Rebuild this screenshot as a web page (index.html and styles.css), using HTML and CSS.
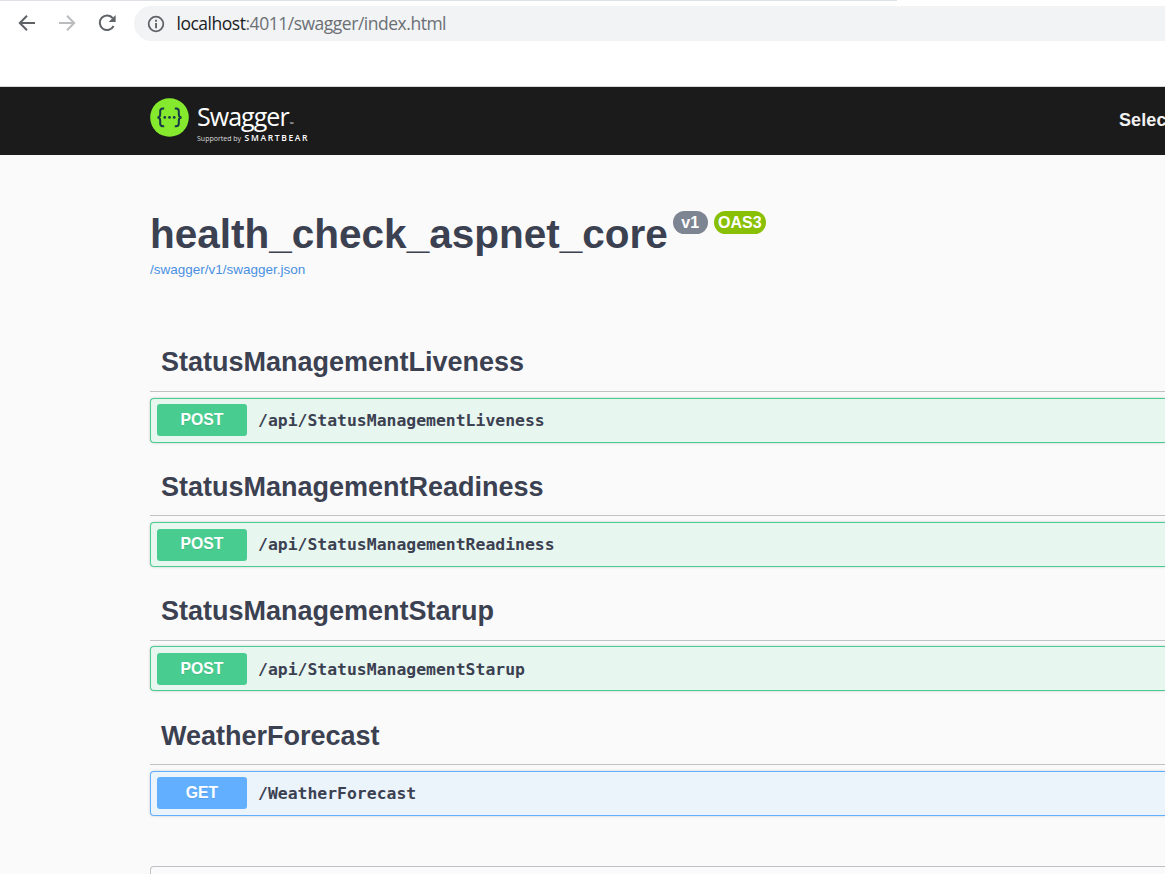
FILE: index.html
```html
<!DOCTYPE html>
<html lang="en">
<head>
<meta charset="utf-8">
<title>Swagger UI</title>
<link rel="stylesheet" href="styles.css">
</head>
<body>
<header class="browser">
  <div class="tab-edge"></div>
  <nav class="toolbar">
    <svg class="nav-icon" viewBox="0 0 20 20" fill="none" stroke="#5f6368" stroke-width="2"><path d="M18 10H3M10 2.8 2.8 10l7.2 7.2"/></svg>
    <svg class="nav-icon" viewBox="0 0 20 20" fill="none" stroke="#babcbe" stroke-width="2"><path d="M2 10h15M10 2.8l7.2 7.2-7.2 7.2"/></svg>
    <svg class="nav-icon" viewBox="0 0 20 20" fill="none" stroke="#5f6368" stroke-width="2"><path d="M15.8 5.2A7.3 7.3 0 1 0 16.6 13"/><path d="M18.6 2v7h-7z" fill="#5f6368" stroke="none"/></svg>
    <div class="address">
      <svg class="info" viewBox="0 0 18 18"><circle cx="9" cy="9" r="7.3" fill="none" stroke="#5f6368" stroke-width="1.8"/><path d="M8.1 4.8h1.9v1.9H8.1zM8.1 8h1.9v5.2H8.1z" fill="#5f6368"/></svg>
      <span class="url"><span class="host">localhost</span>:4011/swagger/index.html</span>
    </div>
  </nav>
</header>
<div class="topbar">
  <div class="brand">
    <svg class="logo" viewBox="0 0 39 39"><circle cx="19.5" cy="19.5" r="19.3" fill="#85ea2d"/><g fill="none" stroke="#173647" stroke-width="2"><path d="M14.2 10.6h-1.4q-2.6 0-2.6 2.6v3q0 3.2-2.8 3.2 2.8 0 2.8 3.2v3q0 2.6 2.6 2.6h1.4M24.8 10.6h1.4q2.6 0 2.6 2.6v3q0 3.2 2.8 3.2-2.8 0-2.8 3.2v3q0 2.6-2.6 2.6h-1.4"/></g><g fill="#173647"><circle cx="14.8" cy="19.4" r="1.35"/><circle cx="19.5" cy="19.4" r="1.35"/><circle cx="24.2" cy="19.4" r="1.35"/></g></svg>
    <div class="wordmark">
      <div class="name">Swagger<span class="tm">™</span></div>
      <div class="support"><span>Supported by</span><b>SMARTBEAR</b></div>
    </div>
  </div>
  <div class="select">Select</div>
</div>
<main class="content">
  <div class="info-head">
    <h1>health_check_aspnet_core</h1>
    <span class="pill version">v1</span><span class="pill oas">OAS3</span>
  </div>
  <a class="spec">/swagger/v1/swagger.json</a>
  <div class="sections">
    <section>
      <h2>StatusManagementLiveness</h2>
      <div class="op post"><span class="method">POST</span><span class="path">/api/StatusManagementLiveness</span></div>
    </section>
    <section>
      <h2>StatusManagementReadiness</h2>
      <div class="op post"><span class="method">POST</span><span class="path">/api/StatusManagementReadiness</span></div>
    </section>
    <section>
      <h2>StatusManagementStarup</h2>
      <div class="op post"><span class="method">POST</span><span class="path">/api/StatusManagementStarup</span></div>
    </section>
    <section>
      <h2>WeatherForecast</h2>
      <div class="op get"><span class="method">GET</span><span class="path">/WeatherForecast</span></div>
    </section>
  </div>
  <div class="models"></div>
</main>
</body>
</html>
```
FILE: styles.css
```css
* { box-sizing: border-box; }
body {
  margin: 0;
  height: 874px;
  overflow: hidden;
  background: #fafafa;
  color: #3b4151;
  font-family: "Liberation Sans", Arial, sans-serif;
}
.browser { height: 87px; background: #fff; border-bottom: 1px solid #d5d7da; }
.tab-edge { width: 897px; height: 1px; background: #dee1e6; }
.toolbar { display: flex; align-items: center; height: 45px; padding-left: 16.5px; gap: 20px; }
.nav-icon { width: 20px; height: 20px; flex: none; margin-top: -1px; }
.address {
  display: flex;
  align-items: center;
  flex: 1;
  height: 35px;
  margin-left: -2.5px;
  padding-left: 13.4px;
  gap: 11.1px;
  border-radius: 18px 0 0 18px;
  background: #f1f3f4;
}
.info { width: 18px; height: 18px; }
.url { margin-top: -1px; font: 17.5px/24px "Open Sans", sans-serif; color: #6b6f74; white-space: nowrap; letter-spacing: -0.48px; }
.host { color: #202124; }

.topbar { display: flex; justify-content: space-between; height: 68px; background: #1b1b1b; padding-left: 150px; overflow: hidden; }
.brand { display: flex; padding-top: 11px; gap: 8px; }
.logo { width: 39px; height: 39px; }
.wordmark { color: #fff; font-family: "Open Sans", sans-serif; white-space: nowrap; }
.name { height: 35px; font-size: 25px; line-height: 36px; letter-spacing: -0.95px; }
.tm { margin-left: 1px; font-size: 5px; letter-spacing: 0; }
.support { display: flex; align-items: baseline; gap: 3.5px; font-size: 7px; line-height: 10px; }
.support span { color: #ddd; letter-spacing: 0; }
.support b { font-size: 8.5px; font-weight: 600; letter-spacing: 1.65px; }
.select { width: 46px; padding-top: 23px; font-size: 18px; line-height: 20px; font-weight: 700; color: #f0f0f0; white-space: nowrap; letter-spacing: 0.1px; }

.content { padding-left: 150px; }
.info-head { display: flex; align-items: flex-start; padding-top: 56px; }
h1 { margin: 0; font-size: 40.5px; line-height: 47px; }
.pill { height: 23px; border-radius: 12px; color: #fff; font-size: 16px; line-height: 23px; font-weight: 700; text-align: center; }
.version { width: 35px; margin-left: 5px; background: #7d8492; }
.oas { width: 52px; margin-left: 6px; background: #89bf04; }
.spec { display: block; height: 16px; margin-top: 4px; font-size: 13.5px; line-height: 16px; color: #4990e2; }
.sections { padding-top: 54px; }
section { height: 124.45px; }
h2 { margin: 0; height: 60px; padding: 0.2px 0 0 11px; border-bottom: 1px solid rgba(59, 65, 81, .3); font-size: 27px; line-height: 60px; }
.op { display: flex; align-items: center; height: 45px; margin-top: 5.55px; padding-left: 6px; gap: 11px; border: 1px solid; border-right: 0; border-radius: 4px 0 0 4px; box-shadow: 0 0 3px rgba(0, 0, 0, .19); }
.post { border-color: #49cc90; background: #e8f6f0; }
.get { border-color: #61affe; background: #ebf3fb; }
.method { width: 90px; height: 32px; margin-top: 0.12px; padding-top: 0.92px; border-radius: 3px; color: #fff; font-size: 15.75px; line-height: 30px; font-weight: 700; text-align: center; text-shadow: 0 1px 0 rgba(0, 0, 0, .1); }
.post .method { background: #49cc90; }
.get .method { background: #61affe; }
.path { margin-top: 1.4px; font: 700 16.43px/20px "DejaVu Sans Mono", monospace; }
.models { height: 8px; margin-top: 36px; border: 1px solid rgba(59, 65, 81, .3); border-width: 1px 0 0 1px; border-radius: 4px 0 0 0; }
```
